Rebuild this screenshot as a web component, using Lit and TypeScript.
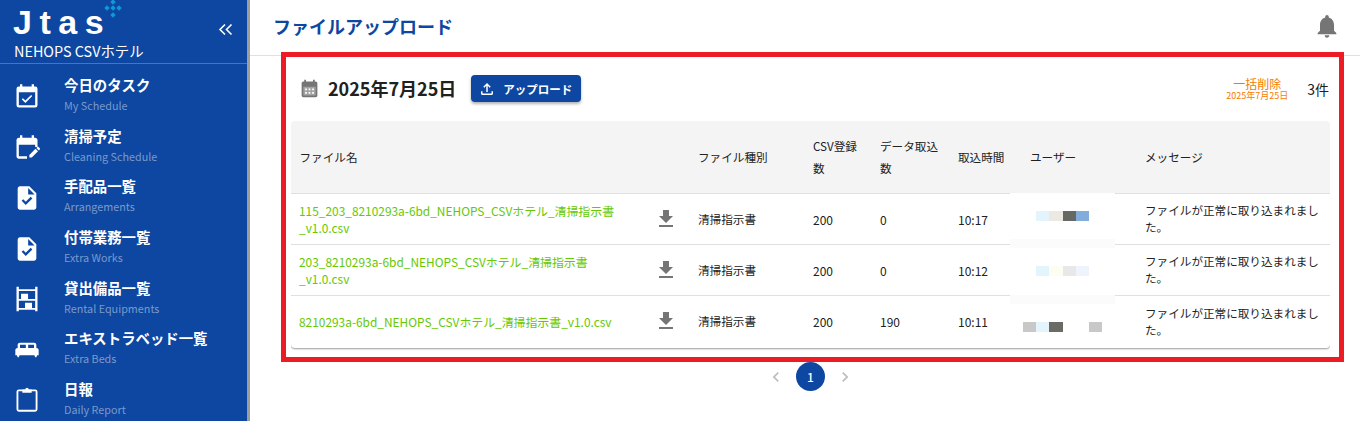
import { LitElement, html, css, svg } from 'lit';
import { customElement } from 'lit/decorators.js';

const ICONS = {
  today: svg`<path d="M19 3h-1V1h-2v2H8V1H6v2H5a2 2 0 0 0-2 2v14a2 2 0 0 0 2 2h14a2 2 0 0 0 2-2V5a2 2 0 0 0-2-2zm0 16H5V8h14zM16.5 11.200l-1-1-4.900 4.900-2.100-2.100-1 1 3.100 3.100z"/>`,
  cleaning: svg`<path d="M5 10h14v2h2V6c0-1.100-.9-2-2-2h-1V2h-2v2H8V2H6v2H5c-1.110 0-1.990.9-1.990 2L3 20c0 1.100.89 2 2 2h7v-2H5v-10zm17.840 4.280-.71.71-2.120-2.120.71-.71c.39-.39 1.020-.39 1.410 0l.71.71c.39.39.39 1.020 0 1.410zm-3.540-.7 2.120 2.120-5.300 5.300H14v-2.120l5.300-5.300z"/>`,
  task: svg`<path d="M14 2H6c-1.100 0-1.990.9-1.990 2L4 20c0 1.100.89 2 2 2h12c1.100 0 2-.9 2-2V8l-6-6zm-3.060 16L7.400 14.460l1.410-1.410 2.120 2.120 4.240-4.240 1.410 1.410L10.940 18zM13 9V3.500L18.500 9H13z"/>`,
  shelves: svg`<path d="M3 1.500h2v21H3zM19 1.500h2v21h-2zM5 3.600h14v1.600H5zM5 12h14v1.600H5zM5 19.700h14v1.600H5zM6.900 7.600h6V12h-6zM10.300 15.300h6v4.400h-6z"/>`,
  bed: svg`<g transform="translate(0 1.440) scale(1 .88)"><path d="M20 10V7c0-1.100-.9-2-2-2H6c-1.100 0-2 .9-2 2v3c-1.100 0-2 .9-2 2v5h1.330L4 19h1l.67-2h12.670l.66 2h1l.67-2H22v-5c0-1.100-.9-2-2-2zm-9 0H6V7h5v3zm7 0h-5V7h5v3z"/></g>`,
  report: svg`<path fill-rule="evenodd" d="M5 3h14a2 2 0 0 1 2 2v15a2 2 0 0 1-2 2H5a2 2 0 0 1-2-2V5a2 2 0 0 1 2-2zm-.4 1.600v15.800h14.800V4.600z"/><path d="M8 3h2.500a1.500 1.500 0 0 1 3 0H16v2.800H8z"/>`,
  bell: svg`<path d="M12 22c1.100 0 2-.9 2-2h-4c0 1.100.89 2 2 2zm6-6v-5c0-3.070-1.640-5.640-4.500-6.320V4c0-.83-.67-1.500-1.500-1.500s-1.500.67-1.500 1.500v.68C7.630 5.360 6 7.920 6 11v5l-2 2v1h16v-1l-2-2z"/>`,
  download: svg`<path d="M5 20h14v-2H5v2zM19 9h-4V3H9v6H5l7 7 7-7z"/>`,
  upload: svg`<path d="M18 15v3H6v-3H4v3c0 1.100.9 2 2 2h12c1.100 0 2-.9 2-2v-3h-2zM7 9l1.410 1.410L11 7.830V16h2V7.830l2.590 2.580L17 9l-5-5-5 5z"/>`,
  calendar: svg`<path d="M19 4h-1V2h-2v2H8V2H6v2H5c-1.100 0-2 .9-2 2v14c0 1.100.9 2 2 2h14c1.100 0 2-.9 2-2V6c0-1.100-.9-2-2-2z"/><path fill="#a3a3a3" d="M5 10h14v10H5z"/><path fill="#fff" d="M7 12h2v2H7zM11 12h2v2h-2zM15 12h2v2h-2zM7 16h2v2H7zM11 16h2v2h-2zM15 16h2v2h-2z"/>`,
  chevronLeft: svg`<path d="M15.410 7.410 14 6l-6 6 6 6 1.410-1.410L10.830 12z"/>`,
  chevronRight: svg`<path d="M10 6 8.590 7.410 13.170 12l-4.580 4.590L10 18l6-6z"/>`,
};

const icon = (name: keyof typeof ICONS, size: number) =>
  html`<svg width=${size} height=${size} viewBox="0 0 24 24" fill="currentColor">${ICONS[name]}</svg>`;

const NAV: { title: string; sub: string; icon: keyof typeof ICONS }[] = [
  { title: '今日のタスク', sub: 'My Schedule', icon: 'today' },
  { title: '清掃予定', sub: 'Cleaning Schedule', icon: 'cleaning' },
  { title: '手配品一覧', sub: 'Arrangements', icon: 'task' },
  { title: '付帯業務一覧', sub: 'Extra Works', icon: 'task' },
  { title: '貸出備品一覧', sub: 'Rental Equipments', icon: 'shelves' },
  { title: 'エキストラベッド一覧', sub: 'Extra Beds', icon: 'bed' },
  { title: '日報', sub: 'Daily Report', icon: 'report' },
];

const ROWS = [
  {
    file: '115_203_8210293a-6bd_NEHOPS_CSVホテル_清掃指示書_v1.0.csv',
    rows: 200, taken: 0, time: '10:17', maskTop: -1, maskHeight: 55,
    pixels: ['transparent', '#e3f4fd', '#ece9e2', '#666863', '#82acd9', 'transparent'],
  },
  {
    file: '203_8210293a-6bd_NEHOPS_CSVホテル_清掃指示書_v1.0.csv',
    rows: 200, taken: 0, time: '10:12', maskTop: 3, maskHeight: 56,
    pixels: ['transparent', '#e3f4fd', '#fdfdf2', '#e8e8e8', '#eef3fc', 'transparent'],
  },
  {
    file: '8210293a-6bd_NEHOPS_CSVホテル_清掃指示書_v1.0.csv',
    rows: 200, taken: 190, time: '10:11', maskTop: 8, maskHeight: 44,
    pixels: ['#c8c8c8', '#e3f4fd', '#696b64', 'transparent', 'transparent', '#c8c8c8'],
  },
];

@customElement('app-root')
export class AppRoot extends LitElement {
  static styles = css`
    :host {
      display: flex;
      position: relative;
      height: 100vh;
      overflow: hidden;
      background: #fff;
      color: #212121;
      font-family: 'Noto Sans CJK JP', 'Noto Sans', sans-serif;
    }
    .sidebar {
      flex: none;
      box-sizing: border-box;
      width: 250px;
      background: #0d47a1;
      border-right: 3px solid #9e9e9e;
      color: #fff;
      overflow: hidden;
    }
    .brand {
      position: relative;
      box-sizing: border-box;
      height: 64px;
      padding-left: 13px;
      border-bottom: 1px solid rgba(255, 255, 255, 0.25);
    }
    .logo {
      display: block;
      height: 41px;
      font-family: 'Liberation Sans', sans-serif;
      font-size: 34px;
      font-weight: 700;
      line-height: 44px;
      letter-spacing: 7.5px;
    }
    .hotel {
      font-size: 14.4px;
      line-height: 20px;
      margin-left: 1px;
    }
    .spark {
      position: absolute;
      left: 104px;
      top: 0;
    }
    .collapse {
      position: absolute;
      left: 216px;
      top: 20px;
    }
    nav {
      padding-top: 6px;
    }
    .item {
      display: flex;
      align-items: center;
      gap: 23px;
      height: 50.6px;
      padding-left: 13px;
    }
    .item svg {
      flex: none;
      margin-top: 3px;
    }
    .item-title {
      font-size: 14.4px;
      font-weight: 700;
      line-height: 20px;
    }
    .item-sub {
      font-size: 10.8px;
      line-height: 20px;
      color: rgba(255, 255, 255, 0.45);
    }
    main {
      flex: 1;
      min-width: 0;
    }
    header {
      display: flex;
      align-items: center;
      justify-content: space-between;
      box-sizing: border-box;
      height: 56px;
      padding: 0 19px 3px 23px;
      border-bottom: 1px solid #e0e0e0;
    }
    h1 {
      margin: 0;
      font-size: 18px;
      font-weight: 700;
      color: #0d47a1;
    }
    .bell {
      display: flex;
      color: #757575;
    }
    .content {
      padding: 19px 30px 0 41px;
    }
    .toolbar {
      display: flex;
      align-items: center;
      height: 27px;
      padding: 0 1px 0 8px;
      margin-bottom: 19px;
    }
    .cal {
      display: flex;
      color: #757575;
      margin-right: 8px;
    }
    .date {
      font-size: 18px;
      font-weight: 700;
      margin-bottom: 2px;
    }
    .upload {
      display: flex;
      align-items: center;
      gap: 7px;
      box-sizing: border-box;
      width: 110px;
      height: 27px;
      margin-left: 15px;
      padding-left: 7px;
      border: 0;
      border-radius: 4px;
      background: #0d47a1;
      color: #fff;
      font: 700 11.500px 'Noto Sans CJK JP', sans-serif;
      box-shadow: 0 2px 3px rgba(0, 0, 0, 0.3);
    }
    .bulk {
      margin-left: auto;
      display: flex;
      flex-direction: column;
      align-items: center;
      color: #f57c00;
      font-size: 12px;
      line-height: 14px;
    }
    .bulk small {
      font-size: 9px;
      line-height: 10px;
    }
    .count {
      margin-left: 19px;
      font-size: 14px;
    }
    .table-wrap {
      border-radius: 4px;
      overflow: hidden;
      padding-bottom: 3px;
    }
    table {
      width: 100%;
      table-layout: fixed;
      border-collapse: separate;
      border-spacing: 0;
      border-radius: 4px;
      box-shadow: 0 1px 2px rgba(0, 0, 0, 0.4);
      font-size: 11.6px;
    }
    th {
      height: 72px;
      padding: 0 9px;
      background: #f4f4f4;
      font-weight: 400;
      line-height: 22px;
      text-align: left;
      border-bottom: 1px solid #e0e0e0;
    }
    th:first-child {
      padding-left: 8.500px;
      border-top-left-radius: 4px;
    }
    th:last-child {
      border-top-right-radius: 4px;
    }
    td {
      position: relative;
      height: 50px;
      padding: 0 9px;
      line-height: 17px;
      border-bottom: 1px solid #e0e0e0;
    }
    tr:last-child td {
      height: 52px;
      border-bottom: 0;
    }
    tr:last-child td:not(.msg) {
      height: 50px;
      padding-bottom: 2px;
    }
    td.file {
      padding-left: 8px;
      padding-right: 20px;
      color: #66c800;
      font-size: 11.9px;
    }
    td.num {
      font-size: 12px;
    }
    td.dl {
      padding-left: 8px;
      padding-right: 0;
      color: #757575;
    }
    .dl svg {
      display: block;
    }
    .mask {
      position: absolute;
      left: -11px;
      width: 105px;
      display: flex;
      padding: 18px 0 0 13px;
      box-sizing: border-box;
      background: linear-gradient(#fff calc(100% - 9px), #fbfbfb 0);
    }
    tr:last-child .mask {
      background: #fff;
    }
    .mask span {
      flex: none;
      width: 13.2px;
      height: 10px;
    }
    .pager {
      display: flex;
      justify-content: center;
      align-items: center;
      gap: 10px;
      margin-top: 11px;
      color: #bdbdbd;
    }
    .page {
      display: flex;
      align-items: center;
      justify-content: center;
      width: 29px;
      height: 29px;
      border-radius: 50%;
      background: #0d47a1;
      color: #fff;
      font-size: 12px;
      font-weight: 500;
    }
    .pager svg {
      display: block;
    }
    .focus {
      position: absolute;
      left: 281px;
      top: 52px;
      box-sizing: border-box;
      width: 1063px;
      height: 310px;
      border: 5px solid #ed1c24;
      pointer-events: none;
    }
  `;

  private renderSidebar() {
    return html`
      <aside class="sidebar">
        <div class="brand">
          <span class="logo">Jtas</span>
          <div class="hotel">NEHOPS CSVホテル</div>
          <svg class="spark" width="18" height="18" viewBox="0 0 18 18" fill="#0d9ad6">
            <path d="M9-.7 11.700 2 9 4.700 6.300 2zM3 5.300 5.700 8 3 10.700.3 8zM9 5.300 11.700 8 9 10.700 6.300 8zM15 5.300 17.700 8 15 10.700 12.300 8zM9 12.300 11.700 15 9 17.700 6.300 15z"/>
          </svg>
          <svg class="collapse" width="20" height="20" viewBox="0 0 20 20" fill="none" stroke="#fff" stroke-width="1.600">
            <path d="M9 4.500 4 9.500l5 5M15.500 4.500l-5 5 5 5"/>
          </svg>
        </div>
        <nav>
          ${NAV.map(
            (n) => html`
              <div class="item">
                ${icon(n.icon, 28)}
                <div>
                  <div class="item-title">${n.title}</div>
                  <div class="item-sub">${n.sub}</div>
                </div>
              </div>
            `,
          )}
        </nav>
      </aside>
    `;
  }

  private renderTable() {
    return html`
      <div class="table-wrap">
        <table>
          <colgroup>
            <col style="width:355px" />
            <col style="width:43px" />
            <col style="width:115px" />
            <col style="width:67px" />
            <col style="width:78px" />
            <col style="width:72px" />
            <col style="width:115px" />
            <col />
          </colgroup>
          <thead>
            <tr>
              <th>ファイル名</th>
              <th></th>
              <th>ファイル種別</th>
              <th>CSV登録数</th>
              <th>データ取込数</th>
              <th>取込時間</th>
              <th>ユーザー</th>
              <th>メッセージ</th>
            </tr>
          </thead>
          <tbody>
            ${ROWS.map(
              (r) => html`
                <tr>
                  <td class="file">${r.file}</td>
                  <td class="dl">${icon('download', 24)}</td>
                  <td>清掃指示書</td>
                  <td class="num">${r.rows}</td>
                  <td class="num">${r.taken}</td>
                  <td class="num">${r.time}</td>
                  <td>
                    <div class="mask" style="top:${r.maskTop}px;height:${r.maskHeight}px">
                      ${r.pixels.map((c) => html`<span style="background:${c}"></span>`)}
                    </div>
                  </td>
                  <td class="msg">ファイルが正常に取り込まれました。</td>
                </tr>
              `,
            )}
          </tbody>
        </table>
      </div>
    `;
  }

  render() {
    return html`
      ${this.renderSidebar()}
      <main>
        <header>
          <h1>ファイルアップロード</h1>
          <span class="bell">${icon('bell', 28)}</span>
        </header>
        <div class="content">
          <div class="toolbar">
            <span class="cal">${icon('calendar', 21)}</span>
            <span class="date">2025年7月25日</span>
            <button class="upload">${icon('upload', 18)}<span>アップロード</span></button>
            <div class="bulk">一括削除<small>2025年7月25日</small></div>
            <span class="count">3件</span>
          </div>
          ${this.renderTable()}
          <div class="pager">
            ${icon('chevronLeft', 20)}
            <span class="page">1</span>
            ${icon('chevronRight', 20)}
          </div>
        </div>
      </main>
      <div class="focus"></div>
    `;
  }
}
